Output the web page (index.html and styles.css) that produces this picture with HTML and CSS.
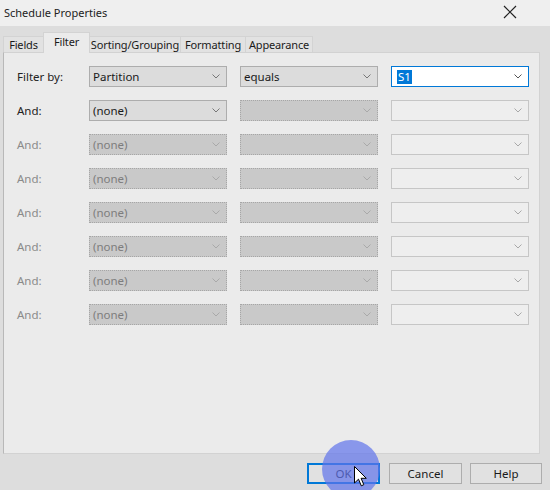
FILE: index.html
```html
<!DOCTYPE html>
<html>
<head>
<meta charset="utf-8">
<link rel="stylesheet" href="styles.css">
</head>
<body>
<div class="window">
  <div class="titlebar">
    <span class="title">Schedule Properties</span>
    <svg class="close" width="16" height="16" viewBox="0 0 16 16"><path d="M2 2 L14 14 M14 2 L2 14" stroke="#222" stroke-width="1.2" fill="none"/></svg>
  </div>
  <div class="body">
    <div class="tabs">
      <div class="tab t-fields">Fields</div>
      <div class="tab t-filter active">Filter</div>
      <div class="tab t-sort">Sorting/Grouping</div>
      <div class="tab t-format">Formatting</div>
      <div class="tab t-app">Appearance</div>
    </div>
    <div class="panel">
      <div class="grid">
        <div class="label">Filter by:</div>
        <div class="combo on"><span>Partition</span><svg class="chev" viewBox="0 0 8 5"><path d="M0.5 0.5 L4 4 L7.5 0.5"/></svg></div>
        <div class="combo on"><span>equals</span><svg class="chev" viewBox="0 0 8 5"><path d="M0.5 0.5 L4 4 L7.5 0.5"/></svg></div>
        <div class="combo edit"><span class="sel">S1</span><svg class="chev" viewBox="0 0 8 5"><path d="M0.5 0.5 L4 4 L7.5 0.5"/></svg></div>

        <div class="label">And:</div>
        <div class="combo on"><span>(none)</span><svg class="chev" viewBox="0 0 8 5"><path d="M0.5 0.5 L4 4 L7.5 0.5"/></svg></div>
        <div class="combo dis"><span></span><svg class="chev" viewBox="0 0 8 5"><path d="M0.5 0.5 L4 4 L7.5 0.5"/></svg></div>
        <div class="combo off"><span></span><svg class="chev" viewBox="0 0 8 5"><path d="M0.5 0.5 L4 4 L7.5 0.5"/></svg></div>

        <div class="label grey">And:</div>
        <div class="combo dis"><span>(none)</span><svg class="chev" viewBox="0 0 8 5"><path d="M0.5 0.5 L4 4 L7.5 0.5"/></svg></div>
        <div class="combo dis"><span></span><svg class="chev" viewBox="0 0 8 5"><path d="M0.5 0.5 L4 4 L7.5 0.5"/></svg></div>
        <div class="combo off"><span></span><svg class="chev" viewBox="0 0 8 5"><path d="M0.5 0.5 L4 4 L7.5 0.5"/></svg></div>

        <div class="label grey">And:</div>
        <div class="combo dis"><span>(none)</span><svg class="chev" viewBox="0 0 8 5"><path d="M0.5 0.5 L4 4 L7.5 0.5"/></svg></div>
        <div class="combo dis"><span></span><svg class="chev" viewBox="0 0 8 5"><path d="M0.5 0.5 L4 4 L7.5 0.5"/></svg></div>
        <div class="combo off"><span></span><svg class="chev" viewBox="0 0 8 5"><path d="M0.5 0.5 L4 4 L7.5 0.5"/></svg></div>

        <div class="label grey">And:</div>
        <div class="combo dis"><span>(none)</span><svg class="chev" viewBox="0 0 8 5"><path d="M0.5 0.5 L4 4 L7.5 0.5"/></svg></div>
        <div class="combo dis"><span></span><svg class="chev" viewBox="0 0 8 5"><path d="M0.5 0.5 L4 4 L7.5 0.5"/></svg></div>
        <div class="combo off"><span></span><svg class="chev" viewBox="0 0 8 5"><path d="M0.5 0.5 L4 4 L7.5 0.5"/></svg></div>

        <div class="label grey">And:</div>
        <div class="combo dis"><span>(none)</span><svg class="chev" viewBox="0 0 8 5"><path d="M0.5 0.5 L4 4 L7.5 0.5"/></svg></div>
        <div class="combo dis"><span></span><svg class="chev" viewBox="0 0 8 5"><path d="M0.5 0.5 L4 4 L7.5 0.5"/></svg></div>
        <div class="combo off"><span></span><svg class="chev" viewBox="0 0 8 5"><path d="M0.5 0.5 L4 4 L7.5 0.5"/></svg></div>

        <div class="label grey">And:</div>
        <div class="combo dis"><span>(none)</span><svg class="chev" viewBox="0 0 8 5"><path d="M0.5 0.5 L4 4 L7.5 0.5"/></svg></div>
        <div class="combo dis"><span></span><svg class="chev" viewBox="0 0 8 5"><path d="M0.5 0.5 L4 4 L7.5 0.5"/></svg></div>
        <div class="combo off"><span></span><svg class="chev" viewBox="0 0 8 5"><path d="M0.5 0.5 L4 4 L7.5 0.5"/></svg></div>

        <div class="label grey">And:</div>
        <div class="combo dis"><span>(none)</span><svg class="chev" viewBox="0 0 8 5"><path d="M0.5 0.5 L4 4 L7.5 0.5"/></svg></div>
        <div class="combo dis"><span></span><svg class="chev" viewBox="0 0 8 5"><path d="M0.5 0.5 L4 4 L7.5 0.5"/></svg></div>
        <div class="combo off"><span></span><svg class="chev" viewBox="0 0 8 5"><path d="M0.5 0.5 L4 4 L7.5 0.5"/></svg></div>
      </div>
    </div>
    <div class="buttons">
      <div class="btn ok">OK</div>
      <div class="btn cancel">Cancel</div>
      <div class="btn help">Help</div>
    </div>
  </div>
  <div class="clickspot"></div>
  <svg class="cursor" width="13" height="21" viewBox="0 0 13 21"><path d="M0.5 0.5 L0.5 17 L4.5 13.2 L7.3 19.8 L9.8 18.7 L7.1 12.3 L12.3 12.3 Z" fill="#fff" stroke="#000" stroke-width="1" stroke-linejoin="round"/></svg>
</div>
</body>
</html>
```
FILE: styles.css
```css
html, body {
  margin: 0;
  padding: 0;
}
body {
  width: 550px;
  height: 490px;
  overflow: hidden;
  background: #dddddd;
  font-family: "Noto Sans", "Open Sans", sans-serif;
  font-size: 11.5px;
  color: #1a1a1a;
}
.window {
  position: relative;
  width: 550px;
  height: 490px;
}
.titlebar {
  height: 26px;
  background: #efefef;
  display: flex;
  align-items: center;
  justify-content: space-between;
  padding: 0 32px 0 4px;
}
.title {
  font-size: 11px;
  color: #222;
  margin-top: -2px;
}
.close {
  width: 16px;
  height: 16px;
  margin-top: -2px;
}
.body {
  padding: 6px 0 0 3px;
}
.tabs {
  display: flex;
  align-items: flex-end;
  height: 20px;
  position: relative;
  z-index: 1;
}
.tab {
  height: 16px;
  box-sizing: border-box;
  border: 1px solid #d3d3d3;
  border-bottom: none;
  background: #e2e2e2;
  display: flex;
  align-items: center;
  justify-content: center;
  line-height: 14px;
  font-size: 11px;
  letter-spacing: -0.15px;
  color: #1a1a1a;
  margin-left: -1px;
  white-space: nowrap;
}
.tab.t-fields { width: 41px; margin-left: 0; }
.t-filter { width: 47px; }
.t-sort { width: 92px; }
.t-format { width: 66px; }
.t-app { width: 68px; }
.tab.active {
  height: 21px;
  margin-bottom: -1px;
  background: #ebebeb;
  align-items: flex-start;
  padding-top: 2px;
}
.panel {
  width: 537px;
  height: 402px;
  box-sizing: border-box;
  background: #ebebeb;
  border: 1px solid #d2d2d2;
  border-left-color: #b8b8b8;
  padding: 13px 0 0 0;
}
.grid {
  display: grid;
  grid-template-columns: 72px 138px 138px 138px;
  grid-auto-rows: 21px;
  column-gap: 13px;
  row-gap: 13px;
}
.label {
  padding-left: 13px;
  display: flex;
  align-items: center;
  color: #222;
  white-space: nowrap;
}
.label.grey {
  color: #8a8a8a;
}
.combo {
  box-sizing: border-box;
  border: 1px solid #adadad;
  background: #dcdcdc;
  display: flex;
  align-items: center;
  justify-content: space-between;
  padding: 0 6px 0 3px;
  color: #1a1a1a;
}
.chev {
  width: 8px;
  height: 5px;
  fill: none;
  stroke: #555;
  stroke-width: 1;
}
.combo.on .chev { stroke: #777; }
.combo.dis {
  background: #c9c9c9;
  border: 1px dotted #a6a6a6;
  color: #7d7d7d;
}
.combo.dis .chev { stroke: #a9a9a9; }
.combo.off {
  background: #eeeeee;
  border: 1px solid #c6c6c6;
}
.combo.off .chev { stroke: #a8a8a8; }
.combo.edit {
  background: #ffffff;
  border: 1px solid #0078d7;
  padding-left: 5px;
}
.sel {
  background: #0078d7;
  color: #fff;
  padding: 0 1px;
  line-height: 14px;
}
.buttons {
  display: flex;
  margin-top: 9px;
  padding-left: 304px;
  gap: 8px;
}
.btn {
  height: 21px;
  box-sizing: border-box;
  border: 1px solid #adadad;
  background: #e1e1e1;
  display: flex;
  align-items: center;
  justify-content: center;
  color: #1a1a1a;
}
.btn.ok {
  width: 73px;
  border: 2px solid #0078d7;
  margin-right: 1px;
}
.btn.cancel { width: 73px; }
.btn.help { width: 72px; }
.clickspot {
  position: absolute;
  left: 322px;
  top: 440px;
  width: 58px;
  height: 58px;
  border-radius: 50%;
  background: rgba(95, 115, 235, 0.7);
}
.cursor {
  position: absolute;
  left: 354px;
  top: 466px;
}
```
